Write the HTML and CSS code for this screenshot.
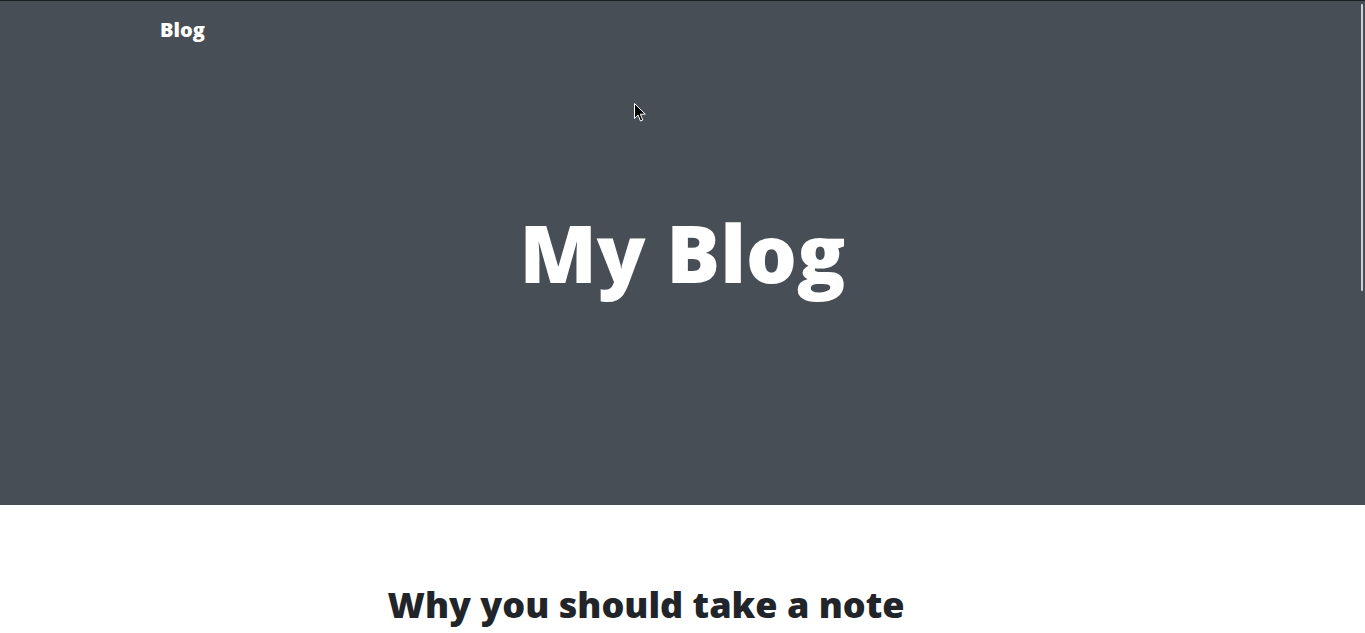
FILE: index.html
```html
<!DOCTYPE html>
<html lang="en">
<head>
<meta charset="utf-8">
<title>My Blog</title>
<link rel="stylesheet" href="styles.css">
</head>
<body>
<header class="masthead">
  <nav class="navbar">
    <a class="brand" href="#">Blog</a>
  </nav>
  <div class="site-heading">
    <h1>My Blog</h1>
  </div>
</header>
<main class="content">
  <article class="post">
    <h2 class="post-title">Why you should take a note</h2>
  </article>
</main>
<div class="scrollbar"></div>
<svg class="cursor" width="13" height="20" viewBox="0 0 13 20">
  <path d="M0.5 0.5 L0.5 15.5 L4 12 L6.5 18 L8.8 17 L6.3 11.2 L11.3 11.2 Z" fill="#000" stroke="#fff" stroke-width="1"/>
</svg>
</body>
</html>
```
FILE: styles.css
```css
html, body {
  margin: 0;
  padding: 0;
}
body {
  font-family: "Open Sans", "Liberation Sans", sans-serif;
  color: #212529;
  background: #fff;
  border-top: 1px solid #1c1f22;
  position: relative;
  overflow: hidden;
  height: 632px;
}
.masthead {
  background: #484e55;
  height: 504px;
  display: flex;
  flex-direction: column;
}
.navbar {
  padding: 14px 0 0 160px;
  height: 31px;
}
.brand {
  color: #fff;
  text-decoration: none;
  font-weight: 800;
  font-size: 20px;
  line-height: 30px;
  display: inline-block;
}
.site-heading {
  margin-top: 158px;
  text-align: center;
}
.site-heading h1 {
  margin: 0;
  color: #fff;
  font-weight: 800;
  font-size: 80px;
  line-height: 96px;
}
.content {
  padding-top: 78px;
}
.post {
  width: 590px;
  margin: 0 auto;
}
.post-title {
  margin: 0;
  font-weight: 800;
  font-size: 36px;
  line-height: 43px;
}
.scrollbar {
  position: absolute;
  top: 3px;
  right: 2px;
  width: 2px;
  height: 287px;
  background: #cfd1d3;
  border-radius: 1px;
}
.cursor {
  position: absolute;
  left: 634px;
  top: 102px;
}
```
